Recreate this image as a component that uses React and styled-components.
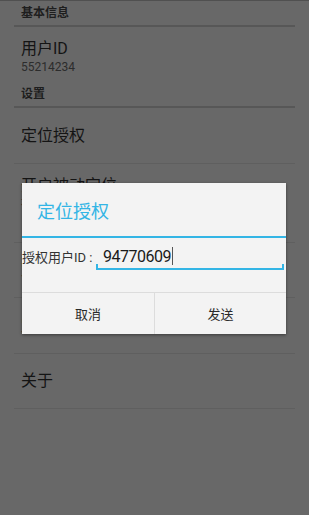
import styled, { createGlobalStyle } from "styled-components";

const GlobalStyle = createGlobalStyle`
  html, body {
    margin: 0;
    padding: 0;
    background: #686868;
  }
  body {
    font-family: Roboto, "Noto Sans CJK SC", sans-serif;
  }
`;

export default function App() {
  return (
    <Screen>
      <GlobalStyle />
      <List>
        <SectionHeader $height={26}>基本信息</SectionHeader>
        <Item $height={53} $top>
          <ItemTitle>用户ID</ItemTitle>
          <ItemSummary>55214234</ItemSummary>
        </Item>
        <SectionHeader $height={28}>设置</SectionHeader>
        <Item $height={56} $divider>
          <ItemTitle>定位授权</ItemTitle>
        </Item>
        <Item $height={79} $divider $top>
          <ItemTitle>开启被动定位</ItemTitle>
          <ItemSummary>被动接收定位请求</ItemSummary>
        </Item>
        <Item $height={55} $divider>
          <ItemTitle>定位间隔</ItemTitle>
        </Item>
        <Item $height={56} $divider>
          <ItemTitle>定位记录</ItemTitle>
        </Item>
        <Item $height={55} $divider>
          <ItemTitle>关于</ItemTitle>
        </Item>
      </List>

      <Dialog>
        <DialogTitle>定位授权</DialogTitle>
        <DialogBody>
          <FieldLabel>授权用户ID :</FieldLabel>
          <Field>
            <FieldValue>94770609</FieldValue>
            <Caret />
          </Field>
        </DialogBody>
        <ButtonBar>
          <DialogButton>取消</DialogButton>
          <DialogButton>发送</DialogButton>
        </ButtonBar>
      </Dialog>
    </Screen>
  );
}

const Screen = styled.div`
  position: relative;
  width: 309px;
  height: 515px;
  overflow: hidden;
  background: #686868;
  border-top: 1px solid #505050;
  box-sizing: border-box;
`;

const List = styled.div`
  display: flex;
  flex-direction: column;
`;

const SectionHeader = styled.div`
  height: ${(p) => p.$height}px;
  margin: 0 14px;
  padding: 0 7px 5px;
  display: flex;
  align-items: flex-end;
  box-sizing: border-box;
  border-bottom: 2px solid #575757;
  font-size: 12px;
  font-weight: bold;
  color: #1e1e1e;
`;

const Item = styled.div`
  height: ${(p) => p.$height}px;
  margin: 0 14px;
  padding: ${(p) => (p.$top ? "12px" : "0")} 7px 0;
  box-sizing: border-box;
  display: flex;
  flex-direction: column;
  justify-content: ${(p) => (p.$top ? "flex-start" : "center")};
  border-bottom: 1px solid ${(p) => (p.$divider ? "#5f5f5f" : "transparent")};
`;

const ItemTitle = styled.div`
  font-size: 16px;
  line-height: 20px;
  color: #141414;
`;

const ItemSummary = styled.div`
  font-size: 12px;
  line-height: 16px;
  color: #2c2c2c;
`;

const Dialog = styled.div`
  position: absolute;
  left: 22px;
  top: 182px;
  width: 264px;
  background: #f3f3f3;
  box-shadow: 0 1px 3px rgba(0, 0, 0, 0.45);
  display: flex;
  flex-direction: column;
`;

const DialogTitle = styled.div`
  height: 55px;
  padding-left: 15px;
  display: flex;
  align-items: center;
  font-size: 18px;
  color: #33b5e5;
  border-bottom: 2px solid #33b5e5;
  box-sizing: border-box;
`;

const DialogBody = styled.div`
  height: 54px;
  display: flex;
  align-items: center;
  padding-bottom: 18px;
  box-sizing: border-box;
`;

const FieldLabel = styled.div`
  font-size: 13px;
  color: #333;
  width: 74px;
  flex: none;
  white-space: nowrap;
`;

const Field = styled.div`
  flex: 1;
  margin-right: 2px;
  margin-top: 2px;
  height: 26px;
  display: flex;
  align-items: center;
  padding-left: 7px;
  box-sizing: border-box;
  border-bottom: 2px solid #33b5e5;
  position: relative;
  &::before,
  &::after {
    content: "";
    position: absolute;
    bottom: 0;
    width: 2px;
    height: 4px;
    background: #33b5e5;
  }
  &::before {
    left: 0;
  }
  &::after {
    right: 0;
  }
`;

const FieldValue = styled.span`
  font-size: 16px;
  letter-spacing: -0.5px;
  color: #1a1a1a;
`;

const Caret = styled.span`
  width: 1px;
  height: 18px;
  background: #555;
  margin-left: 1px;
`;

const ButtonBar = styled.div`
  display: grid;
  grid-template-columns: 1fr 1fr;
  border-top: 1px solid #dcdcdc;
  height: 41px;
`;

const DialogButton = styled.div`
  display: flex;
  align-items: center;
  justify-content: center;
  font-size: 13px;
  color: #2a2a2a;
  & + & {
    border-left: 1px solid #dcdcdc;
  }
`;
